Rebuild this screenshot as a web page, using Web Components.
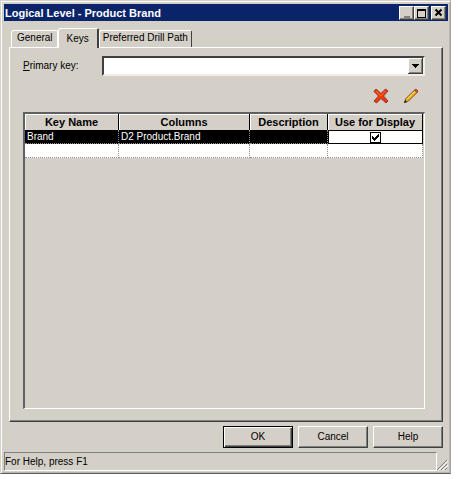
<!DOCTYPE html>
<html lang="en">
<head>
<meta charset="utf-8">
<title>Logical Level - Product Brand</title>
<style>
    body {
        margin: 0;
        background: #fff;
        color: #000;
        font: 10px/14px "Liberation Sans", Arial, sans-serif;
        --face: #d4d0c8;
        --shadow: #808080;
        --dark: #404040;
    }
</style>
</head>
<body>

<dialog-window>
    <title-bar slot="title">Logical Level - Product Brand</title-bar>
    <tab-panel>
        <tab-item slot="tabs">General</tab-item>
        <tab-item slot="tabs" selected>Keys</tab-item>
        <tab-item slot="tabs">Preferred Drill Path</tab-item>
        <primary-key></primary-key>
        <key-tools></key-tools>
        <key-grid></key-grid>
    </tab-panel>
    <push-button slot="buttons" default>OK</push-button>
    <push-button slot="buttons">Cancel</push-button>
    <push-button slot="buttons">Help</push-button>
    <status-bar slot="status">For Help, press F1</status-bar>
</dialog-window>

<script>
function render(element, html) {
    const template = document.createElement("template")
    template.innerHTML = html
    element.attachShadow({ mode: "open" }).appendChild(template.content.cloneNode(true))
}

class DialogWindow extends HTMLElement {
    constructor() {
        super()
        render(this, `
            <style>
                :host {
                    display: flex;
                    flex-direction: column;
                    box-sizing: border-box;
                    min-height: calc(100vh - 5px);
                    margin: 0 9px 5px 0;
                    padding: 2px;
                    background: var(--face);
                    border: 1px solid;
                    border-color: var(--face) #a8a8a8 #606060 var(--face);
                    box-shadow: inset 1px 1px #fff, inset -1px -1px #b8b5ae;
                }

                main {
                    flex: 1;
                    display: flex;
                    padding: 7px 5px 0 6px;
                }

                footer {
                    display: flex;
                    justify-content: flex-end;
                    gap: 5px;
                    padding: 4px 5px 4px;
                }
            </style>
            <slot name="title"></slot>
            <main><slot></slot></main>
            <footer><slot name="buttons"></slot></footer>
            <slot name="status"></slot>
        `)
    }
}

class TitleBar extends HTMLElement {
    constructor() {
        super()
        render(this, `
            <style>
                :host {
                    display: flex;
                    align-items: center;
                    height: 17px;
                    margin: 1px 0 0 1px;
                    padding: 0 2px 0 1px;
                    background: #0a246a;
                    color: #fff;
                    font-size: 11px;
                    font-weight: bold;
                }

                h1 {
                    flex: 1;
                    margin: 0;
                    font: inherit;
                }

                button {
                    width: 15px;
                    height: 14px;
                    padding: 0;
                    background: var(--face);
                    border: 1px solid;
                    border-color: #fff var(--dark) var(--dark) #fff;
                    box-shadow: inset -1px -1px var(--shadow);
                }

                .close {
                    margin-left: 2px;
                }

                svg {
                    display: block;
                    margin: auto;
                }
            </style>
            <h1><slot></slot></h1>
            <button aria-label="Minimize">
                <svg width="11" height="10" shape-rendering="crispEdges"><path d="M3 8h6v2h-6z" fill="#808080"/></svg>
            </button>
            <button aria-label="Maximize">
                <svg width="11" height="10" shape-rendering="crispEdges"><path d="M1 1h9v9h-9zM2 3v6h7v-6z" fill-rule="evenodd"/></svg>
            </button>
            <button class="close" aria-label="Close">
                <svg width="11" height="10"><path d="M2.500 1.500l6 6M8.500 1.500l-6 6" stroke="#000" stroke-width="2"/></svg>
            </button>
        `)
    }
}

class TabPanel extends HTMLElement {
    constructor() {
        super()
        render(this, `
            <style>
                :host {
                    flex: 1;
                    display: flex;
                    flex-direction: column;
                    min-width: 0;
                }

                nav {
                    display: flex;
                    align-items: flex-end;
                    padding-left: 2px;
                }

                section {
                    flex: 1;
                    display: flex;
                    flex-direction: column;
                    padding: 8px 17px 12px 13px;
                    border: 1px solid;
                    border-color: #fff var(--dark) var(--dark) #fff;
                    box-shadow: inset -1px -1px var(--shadow);
                }
            </style>
            <nav role="tablist"><slot name="tabs"></slot></nav>
            <section><slot></slot></section>
        `)
    }
}

class TabItem extends HTMLElement {
    constructor() {
        super()
        render(this, `
            <style>
                :host {
                    display: block;
                }

                button {
                    display: block;
                    height: 17px;
                    padding: 0 3px 2px;
                    background: var(--face);
                    border: 1px solid #fff;
                    border-right-color: var(--dark);
                    border-bottom: 0;
                    border-radius: 3px 2px 0 0;
                    color: inherit;
                    font: inherit;
                    white-space: nowrap;
                }

                :host(:first-child) button {
                    padding: 0 4px 2px 5px;
                    border-right-color: #fff;
                }

                :host([selected]) {
                    position: relative;
                    margin-bottom: -1px;
                }

                :host([selected]) button {
                    height: 20px;
                    padding: 0 8px;
                    border-right-width: 2px;
                }
            </style>
            <button role="tab"><slot></slot></button>
        `)
    }

    connectedCallback() {
        this.shadowRoot.querySelector("button").setAttribute("aria-selected", this.hasAttribute("selected"))
    }
}

class PrimaryKey extends HTMLElement {
    constructor() {
        super()
        render(this, `
            <style>
                :host {
                    display: flex;
                    align-items: center;
                }

                label {
                    width: 79px;
                }

                .combo {
                    flex: 1;
                    display: grid;
                    align-items: center;
                    height: 16px;
                    background: #fff;
                    border: 2px solid;
                    border-color: var(--dark) #f0eee8 #f0eee8 var(--dark);
                }

                select, svg {
                    grid-area: 1 / 1;
                }

                select {
                    appearance: none;
                    width: 100%;
                    height: 16px;
                    padding: 0 18px 0 3px;
                    background: none;
                    border: 0;
                    border-radius: 0;
                    font: inherit;
                }

                svg {
                    justify-self: end;
                    pointer-events: none;
                }
            </style>
            <label for="key"><u>P</u>rimary key:</label>
            <div class="combo">
                <select id="key"><option></option></select>
                <svg width="15" height="16" shape-rendering="crispEdges">
                    <path d="M0 0h15v16h-15z" fill="#404040"/>
                    <path d="M0 0h14v15h-14z" fill="#fff"/>
                    <path d="M1 1h13v14h-13z" fill="#808080"/>
                    <path d="M1 1h12v13h-12z" fill="#d4d0c8"/>
                    <path d="M4 6h7v1h-1v1h-1v1h-1v1h-1v-1h-1v-1h-1v-1h-1z"/>
                </svg>
            </div>
        `)
    }
}

class KeyTools extends HTMLElement {
    constructor() {
        super()
        render(this, `
            <style>
                :host {
                    display: flex;
                    justify-content: flex-end;
                    gap: 14px;
                    padding: 12px 6px 8px;
                }

                button {
                    padding: 0;
                    background: none;
                    border: 0;
                }

                svg {
                    display: block;
                }
            </style>
            <button aria-label="Delete">
                <svg width="16" height="16" viewBox="0 0 16 16">
                    <path d="M3 1L8 5.500L12.500 1L15 3L10.500 8L15 13L13 15L8 10.500L3.500 15L1 13L5.500 8L1 3.500z" fill="#f5370c" stroke="#8c3a2a"/>
                    <path d="M3 3L8 8L12.500 3" fill="none" stroke="#ff6a34"/>
                </svg>
            </button>
            <button aria-label="Edit">
                <svg width="16" height="16" viewBox="0 0 16 16">
                    <path d="M1.500 14.500L3 10.500L11.500 2L14 4.500L5.500 13z" fill="#f7b020" stroke="#75501f"/>
                    <path d="M4 11L12 3" stroke="#ffe070"/>
                    <path d="M11.500 2L13 1L15 3L14 4.500z" fill="#ea5a20" stroke="#a0401c"/>
                    <path d="M1 15L2 12L4 14z" fill="#222"/>
                </svg>
            </button>
        `)
    }
}

class KeyGrid extends HTMLElement {
    constructor() {
        super()
        render(this, `
            <style>
                :host {
                    flex: 1;
                    display: block;
                    padding-right: 1px;
                    border: 2px solid;
                    border-color: #606060 #fff #fff #606060;
                    border-width: 2px 1px 1px 2px;
                }

                table {
                    width: 100%;
                    table-layout: fixed;
                    border-collapse: separate;
                    border-spacing: 0;
                }

                .name { width: 94px; }
                .columns { width: 131px; }
                .description { width: 78px; }

                th, td {
                    box-sizing: border-box;
                    padding: 0;
                    white-space: nowrap;
                }

                th {
                    height: 16px;
                    border-right: 1px solid #000;
                    box-shadow: inset 1px 1px #fff;
                    font-size: 11px;
                }

                td {
                    height: 14px;
                    padding-left: 2px;
                    background: #fff;
                    border: 0 dotted #909090;
                    border-width: 0 1px 1px 0;
                    line-height: 12px;
                }

                .selected td {
                    background: #000;
                    color: #fff;
                }

                .selected td.display {
                    padding: 0;
                    background: #fff;
                    border: 1px solid #000;
                }

                .box {
                    display: grid;
                    justify-content: center;
                }

                .box input, .box svg {
                    grid-area: 1 / 1;
                }

                input {
                    appearance: none;
                    width: 11px;
                    height: 11px;
                    margin: 0;
                    border: 1px solid #000;
                    background: #fff;
                }

                svg {
                    pointer-events: none;
                    visibility: hidden;
                }

                input:checked + svg {
                    visibility: visible;
                }
            </style>
            <table>
                <colgroup><col class="name"><col class="columns"><col class="description"><col></colgroup>
                <thead>
                    <tr><th>Key Name</th><th>Columns</th><th>Description</th><th id="display">Use for Display</th></tr>
                </thead>
                <tbody>
                    <tr class="selected">
                        <td>Brand</td>
                        <td>D2 Product.Brand</td>
                        <td></td>
                        <td class="display">
                            <div class="box">
                                <input type="checkbox" aria-labelledby="display" checked>
                                <svg width="11" height="11" shape-rendering="crispEdges">
                                    <path d="M2 4h1v1h1v1h1v-1h1v-1h1v-1h1v-1h1v3h-1v1h-1v1h-1v1h-1v1h-1v-1h-1v-1h-1z"/>
                                </svg>
                            </div>
                        </td>
                    </tr>
                    <tr><td></td><td></td><td></td><td></td></tr>
                </tbody>
            </table>
        `)
    }
}

class PushButton extends HTMLElement {
    constructor() {
        super()
        render(this, `
            <style>
                :host {
                    display: block;
                }

                button {
                    display: block;
                    width: 70px;
                    height: 22px;
                    padding: 0;
                    background: var(--face);
                    border: 1px solid;
                    border-color: #fff var(--dark) var(--dark) #fff;
                    box-shadow: inset -1px -1px var(--shadow);
                    color: inherit;
                    font: inherit;
                }

                :host([default]) button {
                    border-color: #000;
                    box-shadow: inset 1px 1px #fff, inset -1px -1px var(--dark), inset -2px -2px var(--shadow);
                }
            </style>
            <button><slot></slot></button>
        `)
    }
}

class StatusBar extends HTMLElement {
    constructor() {
        super()
        render(this, `
            <style>
                :host {
                    display: flex;
                    align-items: flex-end;
                    margin-left: 1px;
                }

                output {
                    flex: 1;
                    height: 17px;
                    line-height: 18px;
                    border: 1px solid;
                    border-color: var(--shadow) #fff #fff var(--shadow);
                }
            </style>
            <output><slot></slot></output>
            <svg width="11" height="12"><path d="M0 11L10 1M4 11L10 5M8 11L10 9" stroke="#808080" stroke-width="1"/><path d="M1 12L11 2M5 12L11 6" stroke="#fff" stroke-width="1"/></svg>
        `)
    }
}

customElements.define("dialog-window", DialogWindow)
customElements.define("title-bar", TitleBar)
customElements.define("tab-panel", TabPanel)
customElements.define("tab-item", TabItem)
customElements.define("primary-key", PrimaryKey)
customElements.define("key-tools", KeyTools)
customElements.define("key-grid", KeyGrid)
customElements.define("push-button", PushButton)
customElements.define("status-bar", StatusBar)
</script>
</body>
</html>
